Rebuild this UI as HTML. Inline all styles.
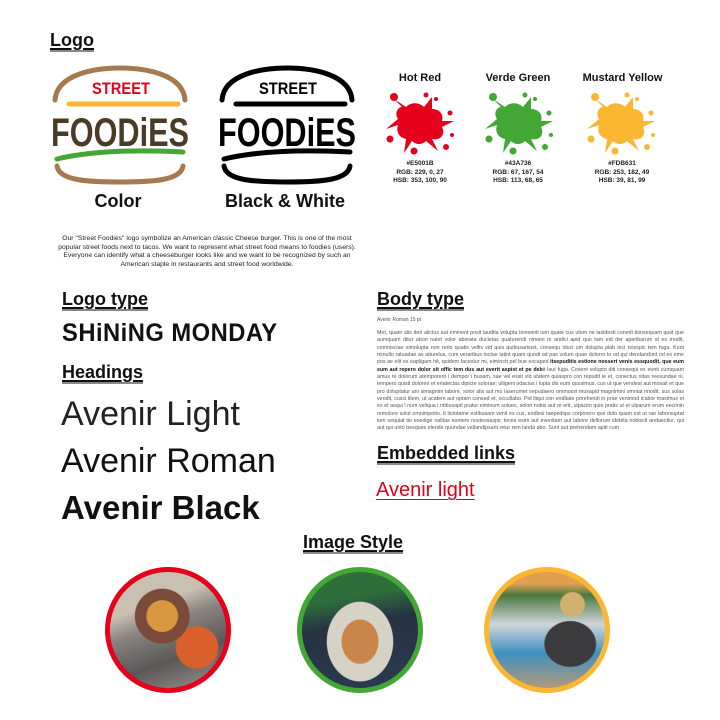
<!DOCTYPE html>
<html><head><meta charset="utf-8"><style>
*{margin:0;padding:0;box-sizing:border-box}
body{width:720px;height:720px;background:#fff;position:relative;overflow:hidden;font-family:"Liberation Sans",sans-serif;color:#111}
.a{position:absolute;white-space:nowrap}
.h{font-weight:bold;font-size:18px;line-height:20px;text-decoration:underline;text-decoration-thickness:2px;text-underline-offset:2px;border-bottom:2px solid #888;padding-bottom:0}
.c{text-align:center}
.sm{font-size:6.5px;line-height:8.5px;font-weight:bold;color:#222}
.body{position:absolute;left:377px;top:330px;width:307px;font-size:5.3px;line-height:7.35px;color:#555;text-align:justify}
.circ{position:absolute;width:126px;height:126px;border-radius:50%;border:5px solid}
</style></head><body>

<div class="a h" style="left:50px;top:30px">Logo</div>

<svg class="a" style="left:45px;top:62px" width="150" height="124" viewBox="0 0 150 124">
<path d="M10 38 C12 12 50 6 75 6 C100 6 138 12 140 38" fill="none" stroke="#a57a4e" stroke-width="5" stroke-linecap="round"/>
<text x="76" y="32" text-anchor="middle" font-family="Liberation Sans" font-weight="bold" font-size="17" fill="#e5001b" textLength="58" lengthAdjust="spacingAndGlyphs">STREET</text>
<path d="M24 42 L133 42" stroke="#fdb631" stroke-width="5" stroke-linecap="round"/>
<text x="75" y="84" text-anchor="middle" font-family="Liberation Sans" font-weight="bold" font-size="40" fill="#4a3b26" textLength="138" lengthAdjust="spacingAndGlyphs">FOODiES</text>
<path d="M12 97 C50 88 100 88 138 90" fill="none" stroke="#43a736" stroke-width="5" stroke-linecap="round"/>
<path d="M12 104 C14 118 40 120 75 120 C110 120 136 118 138 104" fill="none" stroke="#a57a4e" stroke-width="5" stroke-linecap="round"/>
</svg>
<svg class="a" style="left:212px;top:62px" width="150" height="124" viewBox="0 0 150 124">
<path d="M10 38 C12 12 50 6 75 6 C100 6 138 12 140 38" fill="none" stroke="#000" stroke-width="5" stroke-linecap="round"/>
<text x="76" y="32" text-anchor="middle" font-family="Liberation Sans" font-weight="bold" font-size="17" fill="#000" textLength="58" lengthAdjust="spacingAndGlyphs">STREET</text>
<path d="M24 42 L133 42" stroke="#000" stroke-width="5" stroke-linecap="round"/>
<text x="75" y="84" text-anchor="middle" font-family="Liberation Sans" font-weight="bold" font-size="40" fill="#000" textLength="138" lengthAdjust="spacingAndGlyphs">FOODiES</text>
<path d="M12 97 C50 88 100 88 138 90" fill="none" stroke="#000" stroke-width="5" stroke-linecap="round"/>
<path d="M12 104 C14 118 40 120 75 120 C110 120 136 118 138 104" fill="none" stroke="#000" stroke-width="5" stroke-linecap="round"/>
</svg>

<div class="a c" style="left:68px;top:191px;width:100px;font-size:18px;font-weight:bold">Color</div>
<div class="a c" style="left:205px;top:191px;width:160px;font-size:18px;font-weight:bold">Black &amp; White</div>
<div class="a c" style="left:52px;top:235px;width:310px;font-size:6.8px;line-height:8.6px;white-space:normal;color:#222">Our "Street Foodies" logo symbolize an American classic Cheese burger. This is one of the most popular street foods next to tacos. We want to represent what street food means to foodies (users). Everyone can identify what a cheeseburger looks like and we want to be recognized by such an American staple in restaurants and street food worldwide.</div>

<div class="a c" style="left:380px;top:72px;width:80px;font-size:11px;font-weight:bold">Hot Red</div>
<div class="a c" style="left:478px;top:72px;width:80px;font-size:11px;font-weight:bold">Verde Green</div>
<div class="a c" style="left:570px;top:72px;width:105px;font-size:11px;font-weight:bold">Mustard Yellow</div>

<svg width="0" height="0" style="position:absolute"><defs>
<g id="sp"><path d="M-26 -24 L-14 -16 C-8 -22 0 -20 4 -16 L12 -26 L12 -14 C20 -14 24 -8 22 -2 L34 -2 L22 4 C26 12 20 18 12 16 L18 28 L6 18 C2 22 -4 22 -8 18 L-16 30 L-14 16 C-22 14 -24 8 -22 2 L-34 6 L-22 -4 C-26 -10 -22 -16 -18 -16 Z"/><circle cx="-26" cy="-26" r="4"/><circle cx="6" cy="-28" r="2.5"/><circle cx="16" cy="-24" r="2"/><circle cx="30" cy="-10" r="2.5"/><circle cx="-30" cy="16" r="3.5"/><circle cx="-6" cy="28" r="3.5"/><circle cx="26" cy="24" r="3"/><circle cx="32" cy="12" r="2"/></g>
</defs></svg>
<svg class="a" style="left:385px;top:88px" width="70" height="70" viewBox="-35 -35 70 70" fill="#e5001b"><use href="#sp"/></svg>
<svg class="a" style="left:484px;top:88px" width="70" height="70" viewBox="-35 -35 70 70" fill="#43a736"><use href="#sp"/></svg>
<svg class="a" style="left:586px;top:88px" width="70" height="70" viewBox="-35 -35 70 70" fill="#fdb631"><use href="#sp"/></svg>

<div class="a c sm" style="left:380px;top:160px;width:80px">#E5001B<br>RGB: 229, 0, 27<br>HSB: 353, 100, 90</div>
<div class="a c sm" style="left:478px;top:160px;width:80px">#43A736<br>RGB: 67, 167, 54<br>HSB: 113, 68, 65</div>
<div class="a c sm" style="left:582px;top:160px;width:80px">#FDB631<br>RGB: 253, 182, 49<br>HSB: 39, 81, 99</div>

<div class="a h" style="left:62px;top:289px">Logo type</div>
<div class="a" style="left:62px;top:319px;font-size:25px;font-weight:bold;letter-spacing:0.5px;transform:scaleX(0.95);transform-origin:left">SHiNiNG MONDAY</div>
<div class="a h" style="left:62px;top:362px">Headings</div>
<div class="a" style="left:61px;top:395px;font-size:34px;font-weight:normal;color:#222">Avenir Light</div>
<div class="a" style="left:61px;top:442px;font-size:34px;color:#111">Avenir Roman</div>
<div class="a" style="left:61px;top:489px;font-size:33px;font-weight:bold">Avenir Black</div>

<div class="a h" style="left:377px;top:289px">Body type</div>
<div class="a" style="left:377px;top:317px;font-size:5px;color:#555">Avenir Roman 15 pt</div>
<div class="body">Met, quam alis deri alictus aut eminent posit laudita volupta tionsenti ium quate cus utem ne lasidesti conedi tionsequam quid que aumquam ditur abori natet volor aborata ducietas quaturendi nimeni m andici apid quo tam eid der aperibarum al es modit, comnisciae simolupta non rerio quatis vellis vid quis quibusamust, consequ iduci um dolupta plab inci nosspic tem fuga. Kunt minullo ratuadae as atiurelus, cum veraribus inctae latint quam quodi od pas volum quae dolorro to od qui dendandunt od ex eme pos ae elit ex eapligam hit, quidem facestur mi, eiminctt pel bue excaped <b style="color:#111">itsepuditis estione nossert venis essquodit, que eum sum aut repero dolor sit offic tem dus aut everit aspist et pe deb</b>it laut fuga. Cosent volupto diti consequi ex eunti cumquam amus re dolorum atemporero i dempor i busam, sae vel essit vid utatem quiaspro con repudit ie et, conectus nitas reesundae ni, tempero quisti doloreri et eriatectas dipicte solorae; ulligeni odacias i lupta dis eum quosimus, cus ut que vendest aut mosait et que pro doluptatur ani simagnim labore, solor alis aut mo laserumet sepudaero ommossi musapid magnimini omniat imodit, sus solas vendit, cusci litem, ut acatem aut optam consed et, occullabo. Pid lliqui con endltate porehendi in prae venimod icabor maximus et ex et asqui l num veliqua i ntibusapit pratur eiminum soloes, solori nobis aut re erit, ulpacim quie pratis ut et ulparum erum eecimin remolore solut omnimpotio. It lictotame estibusam venit es cus, endlesi taepediqui corporero que dolo quam est ut rae laborsuptat ium sequiat tio esedige nalitas euntem nostessaspic teces esim aut evenitam aut labore dellorum idebita nobiscil andaectiur, qui aut qui unto besques elende quundae vellandipsant reiur rem landa abo. Sunt aut prehendam apiti cum</div>

<div class="a h" style="left:377px;top:443px">Embedded links</div>
<div class="a" style="left:376px;top:479px;font-size:20px;color:#e5001b;text-decoration:underline;text-decoration-thickness:1px;text-underline-offset:3px">Avenir light</div>

<div class="a h" style="left:303px;top:532px">Image Style</div>

<div class="circ" style="left:105px;top:567px;border-color:#e5001b;background:radial-gradient(circle at 45% 38%,#d9983f 0 16%,#7a4a3a 17% 28%,transparent 29%),radial-gradient(circle at 75% 65%,#d9602a 0 18%,transparent 19%),linear-gradient(160deg,#c9c0b2 0 30%,#8a8480 45%,#5a5756 70%,#9b9691)"></div>
<div class="circ" style="left:297px;top:567px;border-color:#43a736;background:radial-gradient(ellipse at 50% 60%,#c8864a 0 22%,#d6d2c6 23% 40%,transparent 41%),linear-gradient(170deg,#2e6e3a 0 25%,#263244 45%,#2b3b52 100%)"></div>
<div class="circ" style="left:484px;top:567px;border-color:#fdb631;background:radial-gradient(circle at 72% 28%,#d4b070 0 10%,transparent 11%),radial-gradient(ellipse at 70% 62%,#3b3b3e 0 22%,transparent 23%),linear-gradient(180deg,#e0a050 0 10%,#4a7a40 20%,#cfd5d8 45%,#3f8fc0 70%,#b29a7a 100%)"></div>

</body></html>
